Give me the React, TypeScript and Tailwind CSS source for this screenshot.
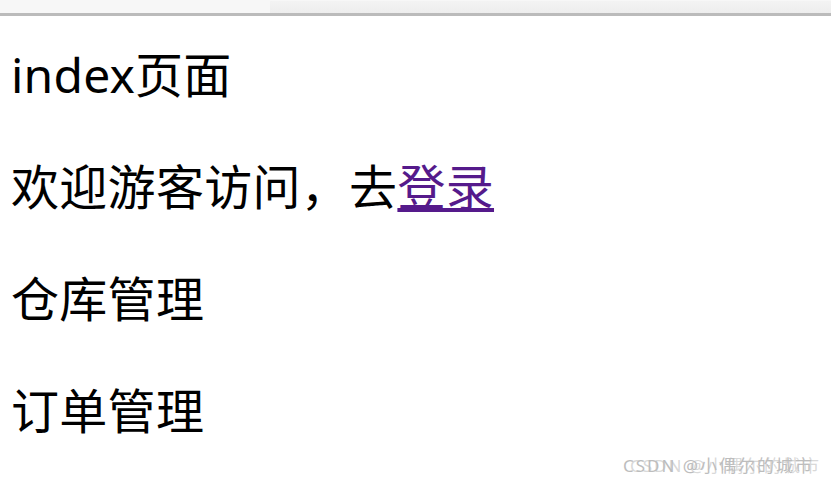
export default function App() {
  const font = { fontFamily: '"Noto Sans", "Noto Sans CJK SC", sans-serif' }
  return (
    <div className="relative w-[831px] h-[486px] bg-white overflow-hidden" style={font}>
      <div className="flex h-[13px] bg-[#f7f7f7]">
        <div className="w-[270px]" />
        <div className="flex-1 mt-px bg-gradient-to-b from-[#f3f3f3] to-[#ededed]" />
      </div>
      <div className="h-[3px] bg-[#bbbbbb]" />
      <div className="flex flex-col gap-[48px] pt-[27px] pl-[11px] text-[48px] leading-[64px] text-black">
        <p className="tracking-[0.2px]">index页面</p>
        <p className="tracking-[0.3px]">
          欢迎游客访问，去<a href="#" className="text-[#551a8b] underline">登录</a>
        </p>
        <p className="tracking-[0.3px]">仓库管理</p>
        <p className="tracking-[0.3px]">订单管理</p>
      </div>
      <div className="absolute left-[623px] top-[456px] text-[17px] leading-[20px] tracking-[2px] text-[#bdbdbd] whitespace-nowrap [text-shadow:7px_0_0_rgba(200,200,200,0.7)]">
        CSDN @小偶尔的城市
      </div>
    </div>
  )
}
